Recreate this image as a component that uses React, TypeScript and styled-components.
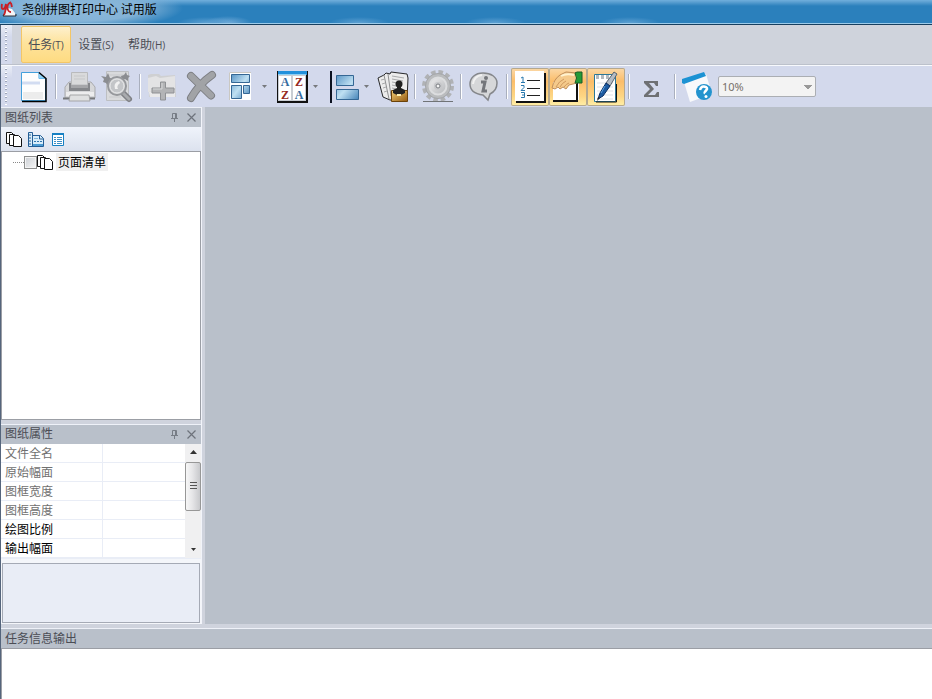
import React from "react";
import styled, { createGlobalStyle, css } from "styled-components";

const Global = createGlobalStyle`
  *, *::before, *::after { box-sizing: border-box; }
  body {
    margin: 0;
    background: #cfd3dd;
    color: #4b4d55;
    font: 12px/18px "Noto Sans CJK SC", sans-serif;
  }
  button, select, input { font: inherit; color: inherit; }
`;

const bevel = css`
  border: 1px solid #9b9ea5;
`;

const Window = styled.div`
  display: flex;
  flex-direction: column;
  min-height: 100vh;
`;

/* ---------- title bar ---------- */

const TitleBar = styled.header`
  display: flex;
  align-items: flex-start;
  gap: 4px;
  height: 25px;
  border-bottom: 1px solid #173f5f;
  box-shadow: inset 0 -1px #9ccbea;
  background:
    radial-gradient(ellipse 30px 6px at 207px 23px, #5da0d2, transparent),
    radial-gradient(ellipse 24px 7px at 228px 23px, #72abd9, transparent),
    radial-gradient(ellipse 30px 6px at 359px 23px, #5da0d2, transparent),
    radial-gradient(ellipse 30px 6px at 495px 23px, #5da0d2, transparent),
    radial-gradient(ellipse 30px 6px at 630px 23px, #5da0d2, transparent),
    radial-gradient(ellipse 105px 22px at 78px 8px, #8db9da 0%, #84b3d7 60%, transparent),
    linear-gradient(#6fafdd 0, #67a7d6 1px, #2b80bc 6px);
  h1 {
    margin: 0;
    font-size: 12px;
    font-weight: 400;
    line-height: 18px;
    color: #000;
  }
`;

/* ---------- command bars ---------- */

const Frame = styled.div`
  display: flex;
  flex-direction: column;
  flex: 1;
  border-left: 1px solid #55657c;
`;

const Grip = styled.span`
  flex: none;
  align-self: stretch;
  width: 11px;
  padding: 2px 5px 2px 4px;
  background: linear-gradient(#e9edf6, #d3d9ec 12px);
  &::after {
    content: "";
    display: block;
    height: 100%;
    background: repeating-linear-gradient(#fff 0 1px, #9da5b9 1px 2px, transparent 2px 4px);
  }
`;

const MenuBar = styled.nav`
  display: flex;
  height: 40px;
  background: #cfd3dc;
  border-bottom: 1px solid #bcc1cb;
`;

const MenuList = styled.div`
  display: flex;
  padding: 1px 0 1px 9px;
`;

const MenuItem = styled.button<{ $hot?: boolean }>`
  min-width: 50px;
  padding: 0 6px 2px;
  border: 1px solid transparent;
  border-radius: 2px;
  background: none;
  white-space: nowrap;
  ${(p) =>
    p.$hot &&
    css`
      border-color: #f3c667;
      background: linear-gradient(#fdf0cd, #fee39c 45%, #fedb82);
    `}
  small {
    font: 10px "Open Sans", sans-serif;
  }
`;

const ToolBar = styled.div`
  display: flex;
  align-items: center;
  height: 42px;
  border-top: 1px solid #f7f9fd;
  background: #d3d9ec;
`;

const Tools = styled.div`
  display: flex;
  align-items: center;
  padding-left: 2px;
`;

const Tool = styled.button<{ $on?: boolean }>`
  display: block;
  flex: none;
  width: 38px;
  height: 38px;
  padding: 0;
  border: 0;
  background: none;
  svg { display: block; }
  ${(p) =>
    p.$on &&
    css`
      border-radius: 2px;
      box-shadow: inset 0 0 0 1px #b4a88f;
      background: linear-gradient(#fbd9a8, #fbbd6a 35%, #fdd684 75%, #fff0a8);
    `}
`;

const DropArrow = styled.button`
  flex: none;
  width: 13px;
  height: 38px;
  padding: 0;
  border: 0;
  background: none;
  svg { display: block; margin: auto; }
`;

const Separator = styled.span`
  flex: none;
  width: 2px;
  height: 25px;
  margin: 0 3px;
  border-left: 1px solid #a9afbd;
  border-right: 1px solid #fff;
`;

const ZoomSelect = styled.select`
  appearance: none;
  width: 98px;
  height: 21px;
  margin-left: 1px;
  padding: 0 3px;
  ${bevel}
  border-color: #abaeb3;
  border-radius: 2px;
  color: #77716a;
  opacity: 1;
  font: 11px "Noto Sans", sans-serif;
  background:
    linear-gradient(to bottom left, #999 50%, transparent 51%) 85px 8px / 4px 4px no-repeat,
    linear-gradient(to bottom right, #999 50%, transparent 51%) 89px 8px / 4px 4px no-repeat,
    #f3f3f3;
`;

/* ---------- docked panels ---------- */

const Body = styled.div`
  display: flex;
  flex: 1;
  min-height: 0;
`;

const Dock = styled.aside`
  display: flex;
  flex-direction: column;
  flex: none;
  width: 201px;
  border-right: 1px solid #f2f4fa;
`;

const Workspace = styled.main`
  flex: 1;
  margin-left: 3px;
  background: #b9c0ca;
`;

const Panel = styled.section<{ $grow?: boolean }>`
  display: flex;
  flex-direction: column;
  flex: ${(p) => (p.$grow ? "1" : "none")};
`;

const PanelHead = styled.div`
  display: flex;
  align-items: center;
  height: 20px;
  padding: 0 1px 0 4px;
  border-top: 1px solid #eef1f8;
  background: #b9c0ca;
  h2 {
    flex: 1;
    margin: 0;
    font-size: 12px;
    font-weight: 400;
    line-height: 16px;
    padding-bottom: 2px;
  }
`;

const HeadButton = styled.button`
  width: 17px;
  height: 17px;
  padding: 0;
  border: 0;
  background: none;
  svg { display: block; margin: auto; }
`;

const PanelTools = styled.div`
  display: flex;
  align-items: center;
  gap: 5px;
  height: 24px;
  padding-left: 5px;
  background: linear-gradient(#eff3fb, #dce2ee);
`;

const SmallTool = styled.button`
  width: 17px;
  height: 17px;
  padding: 0;
  border: 0;
  background: none;
  svg { display: block; }
`;

const Tree = styled.div`
  flex: 1;
  ${bevel}
  background: #fff;
`;

const TreeRow = styled.label`
  display: flex;
  align-items: center;
  height: 20px;
  padding-left: 11px;
  color: #000;
  &::before {
    content: "";
    width: 11px;
    border-top: 1px dotted #888;
  }
  span {
    margin-left: 2px;
    padding: 0 2px;
    background: #f0f0f0;
  }
`;

const TreeCheck = styled.input`
  appearance: none;
  width: 13px;
  height: 13px;
  margin: 0;
  border: 1px solid #8e8f8f;
  box-shadow: inset 0 0 0 1px #f4f4f4;
  background: linear-gradient(135deg, #cbcfd5, #f6f6f6);
`;

const GridArea = styled.div`
  display: flex;
  background: #fff;
`;

const PropTable = styled.table`
  flex: 1;
  border-collapse: collapse;
  table-layout: fixed;
  th, td {
    height: 19px;
    padding: 0 0 0 4px;
    border-bottom: 1px solid #e9edf6;
    line-height: 18px;
    text-align: left;
  }
  th {
    width: 101px;
    border-right: 1px solid #e9edf6;
    font-weight: 400;
  }
`;

const PropRow = styled.tr<{ $editable: boolean }>`
  color: ${(p) => (p.$editable ? "#000" : "#707070")};
`;

const ScrollTrack = styled.div`
  display: flex;
  flex-direction: column;
  width: 16px;
  background: #f0f0f1;
`;

const ScrollButton = styled.button`
  height: 18px;
  padding: 0;
  border: 0;
  background: none;
  svg { display: block; margin: auto; }
`;

const Thumb = styled.div`
  display: grid;
  place-content: center;
  height: 49px;
  margin-bottom: auto;
  border: 1px solid #979797;
  border-radius: 2px;
  background: linear-gradient(90deg, #f7f7f7, #e6e6e8 45%, #c8c9cc);
`;

const Description = styled.div`
  padding: 4px 1px 1px;
  border-top: 1px solid #e9edf6;
  background: #f4f6fa;
  &::after {
    content: "";
    display: block;
    height: 60px;
    border: 1px solid #a5aab5;
    background: #e9edf6;
  }
`;

const Spaced = styled.div`
  margin-top: 4px;
`;

const OutputText = styled.div`
  height: 51px;
  border-top: 1px solid #9b9ea5;
  border-left: 1px solid #9b9ea5;
  background: #fff;
`;

/* ---------- drawings ---------- */

const Gradients = () => (
  <svg width="0" height="0" style={undefined} aria-hidden="true" display="block">
    <defs>
      <linearGradient id="steel" x1="0" y1="0" x2="1" y2="1">
        <stop offset="0" stopColor="#5c97c6" />
        <stop offset=".5" stopColor="#bfe0f2" />
        <stop offset="1" stopColor="#4583b8" />
      </linearGradient>
      <linearGradient id="silver" x1="0" y1="0" x2="1" y2="1">
        <stop offset="0" stopColor="#eeeeef" />
        <stop offset="1" stopColor="#b4b6b9" />
      </linearGradient>
      <linearGradient id="brass" x1="0" y1="0" x2="1" y2="1">
        <stop offset="0" stopColor="#f3cf77" />
        <stop offset="1" stopColor="#94590f" />
      </linearGradient>
    </defs>
  </svg>
);

const Glyph = ({ children }: { children: React.ReactNode }) => (
  <svg width="38" height="38" viewBox="0 0 38 38" aria-hidden="true">
    {children}
  </svg>
);

const AppLogo = () => (
  <svg width="18" height="20" viewBox="0 0 18 20" aria-hidden="true">
    <path d="M4 13l4-5 4 1 3 4v3H4z" fill="#f5f5f5" />
    <path d="M4 14l-1 2h13v-2" fill="none" stroke="#2c2c33" />
    <path d="M2 4q-1 5 1 5t3-5q0 7-2 11M11 2Q7 4 7.500 8T11 12M11 3l1 4" fill="none" stroke="#c91f26" strokeWidth="1.800" />
  </svg>
);

const NewIcon = () => (
  <Glyph>
    <path d="M7.500 4.500h17l7 6v22h-24z" fill="#fdfdfd" />
    <path d="M9 24h20v7H9z" fill="#ececec" />
    <path d="M8 15h18" stroke="#d2dcf1" strokeWidth="3" />
    <path d="M25 4.500v6h6.500v22h-24v-28z" fill="none" stroke="#43a0dc" />
    <path d="M25 4l6.500 6.500H25z" fill="#8fd0f5" />
    <path d="M25 4.500l7 6V33.500H8" fill="none" stroke="#000" strokeWidth="1.500" />
  </Glyph>
);

const PrintIcon = () => (
  <Glyph>
    <path d="M5 19l4-5h22l4 5v11H5z" fill="#d6d7d9" stroke="#a9aaad" />
    <path d="M11.500 4.500h16V17h-16z" fill="#d9dadb" stroke="#b9babc" />
    <path d="M14 8h11M14 11h11" stroke="#c6c7c9" />
    <path d="M9 15h2v4h17v-4h2v8H9z" fill="#85878b" />
    <path d="M11 17h17v3H11z" fill="#a5a6a9" />
    <path d="M6 24h28v4H6z" fill="#ededee" />
    <path d="M3 30.500h32" stroke="#77797c" strokeWidth="2" />
    <path d="M10 27h19l1 6H9z" fill="#dfe0e1" stroke="#a5a6a8" />
  </Glyph>
);

const PreviewIcon = () => (
  <Glyph>
    <path d="M8.500 3.500h22v29h-22z" fill="#d9dadc" stroke="#bdbfc2" />
    <path d="M11 29h12M11 7h16" stroke="#c9cacc" />
    <path d="M3 8l5 1 2-4 2 5 4 1-4 3-1 5-3-4-3-1 1-3zM23 8l3-1 2-3 1 3 3 1-2 2v3l-3-2-3 1z" fill="#8b8d91" />
    <path d="M25 25l6 6" stroke="#7f8186" strokeWidth="6" strokeLinecap="round" />
    <path d="M25 25l6 6" stroke="#a9abae" strokeWidth="3" strokeLinecap="round" />
    <circle cx="19" cy="18" r="9" fill="#d2d3d5" stroke="#96989c" strokeWidth="2" />
    <circle cx="19" cy="18" r="7" fill="#c3c5c8" stroke="#e6e7e8" />
    <path d="M17 21q-2-6 4-8l1 2q-4 3-2 6z" fill="#f1f1f1" />
  </Glyph>
);

const AddIcon = () => (
  <Glyph>
    <path d="M4 7l3-1h8l2 2 14-1 1 22H5z" fill="#cfd0d2" />
    <path d="M4 10l8-2 4 2 15-2v13L4 24z" fill="#e3e3e4" />
    <path d="M5 24l26-2v7H6z" fill="#e9e9ea" />
    <path d="M16.500 14h5v6H30v5h-8.500v7h-5v-7H8v-5h8.500z" fill="#b3b4b6" stroke="#8f9194" />
    <path d="M18 15v6H9" fill="none" stroke="#d6d7d8" />
  </Glyph>
);

const DeleteIcon = () => (
  <Glyph>
    <g fill="none" strokeLinecap="round">
      <path d="M9 8l20 19.500M30 7Q17 16 9 30" stroke="#7d7f83" strokeWidth="8" />
      <path d="M9 8l20 19.500M30 7Q17 16 9 30" stroke="#a1a3a6" strokeWidth="6" />
    </g>
  </Glyph>
);

const LayoutIcon = () => (
  <Glyph>
    <path d="M9 4h22v28H9z" fill="#fff" />
    <path d="M9.500 32V4.500H31" fill="none" stroke="#cac8c2" />
    <g fill="url(#steel)" stroke="#356794">
      <path d="M11.500 6.500h18v8h-18zM11.500 17.500h10v13h-10zM23.500 17.500h6v8h-6z" />
    </g>
  </Glyph>
);

const SortIcon = () => (
  <Glyph>
    <path d="M6 3h31v32H6z" fill="#111" />
    <path d="M7 7h28v26H7z" fill="#c9cdd3" />
    <path d="M8 8h12v24H8zM22 8h12v24H22z" fill="#fff" />
    <path d="M7 3h29v4H7z" fill="#2391dc" />
    <path d="M7 6.500h28" stroke="#8fd0f5" />
    <g fontFamily="Liberation Serif, serif" fontSize="12" fontWeight="700" textAnchor="middle">
      <text x="14" y="18" fill="#366b9f">A</text>
      <text x="28" y="18" fill="#952820">Z</text>
      <text x="14" y="31" fill="#952820">Z</text>
      <text x="28" y="31" fill="#366b9f">A</text>
    </g>
  </Glyph>
);

const AlignIcon = () => (
  <Glyph>
    <path d="M9 3v32" stroke="#0b1120" strokeWidth="2" />
    <g fill="url(#steel)" stroke="#356794">
      <path d="M14.500 7.500h17v10h-17zM14.500 21.500h22v10h-22z" />
    </g>
  </Glyph>
);

const SecureIcon = () => (
  <Glyph>
    <path d="M5 10l6-3 2-2 4 1 1-2 16 2 1 4-1 22H17l-7-3z" fill="#ececec" stroke="#28292b" strokeLinejoin="round" />
    <path d="M11 7l5 24M15 6l3 22" fill="none" stroke="#8e8f90" />
    <path d="M8 12l4-1M9 16l3-1M10 20l3-1M11 24l3-1M19 8l12 2M19 11l11 2M19 14l5 1M19 17l4 1M19 20l4 1" stroke="#a9aaab" />
    <path d="M18.500 22.500h16v11h-16z" fill="url(#brass)" stroke="#6b420a" />
    <circle cx="26" cy="16" r="3.500" fill="#202020" />
    <path d="M24 18h4v2l4 2v3q-6 4-12 0v-3l4-2z" fill="#202020" />
    <path d="M24 27h4" stroke="#fff0b5" strokeWidth="2" />
  </Glyph>
);

const GearIcon = () => (
  <Glyph>
    <circle cx="19" cy="18" r="14" fill="none" stroke="#b0b2b5" strokeWidth="4" strokeDasharray="4.500 2.830" />
    <circle cx="19" cy="18" r="12.500" fill="#babcbe" stroke="#a3a5a8" />
    <circle cx="19" cy="18" r="8.500" fill="url(#silver)" stroke="#dcdddf" strokeWidth="2" />
    <circle cx="19" cy="18" r="4" fill="#c6c7ca" />
    <circle cx="19" cy="18" r="2" fill="#f4f4f4" stroke="#7a7c80" />
    <path d="M4 33.500h30" stroke="#707377" />
  </Glyph>
);

const InfoIcon = () => (
  <Glyph>
    <path d="M18 5c8 0 14 4 14 10 0 5-3 9-7 11l-2 6-5-5C10 26 5 22 5 16S10 5 18 5z" fill="#d6d7d9" stroke="#85878b" strokeWidth="1.500" />
    <path d="M8 16q1-8 9-9" fill="none" stroke="#f1f1f1" strokeWidth="2" />
    <circle cx="21" cy="10" r="2" fill="#74767b" />
    <path d="M16 14h4l-2 9h4" fill="none" stroke="#74767b" strokeWidth="3" />
  </Glyph>
);

const ListIcon = () => (
  <Glyph>
    <path d="M5 5h30v30H5z" fill="#111" />
    <path d="M4 3h29v30H4z" fill="#fff" />
    <path d="M16 12.500h13M16 20.500h13M16 27.500h13" stroke="#222" />
    <g fill="none" stroke="#2878ad">
      <path d="M10 10l2-1v5M10 14.500h4M10 17.500h3v2l-3 3h4M10 24.500h3.500v5H10M11 27h2" />
    </g>
  </Glyph>
);

const HandIcon = () => (
  <Glyph>
    <path d="M4 14h26v18H4z" fill="#fff" />
    <path d="M4 33h24V14" fill="none" stroke="#111" strokeWidth="2" />
    <path d="M3 20q2-9 8-13l6-3 11 1v10l-8 2-3 4-3-2-3 2-2-2-3 2z" fill="#f5ca8b" stroke="#c08f5c" />
    <path d="M7 19q3-6 8-8M11 19q2-4 6-6M15 19q2-3 5-4" fill="none" stroke="#cf995e" />
    <path d="M12 8q5-3 13-1" fill="none" stroke="#fff2cf" strokeWidth="2" />
    <path d="M26 5l2-1h5v11h-7q3-5 0-10z" fill="#229b37" stroke="#185c26" />
  </Glyph>
);

const NoteIcon = () => (
  <Glyph>
    <path d="M7.500 6.500h21v27h-21z" fill="#fff" stroke="#2c7898" />
    <path d="M9 9h18" stroke="#b4b9be" strokeWidth="4" strokeDasharray="3 2" />
    <path d="M10 15h16M10 19h16M10 23h16M10 27h16M10 31h16" stroke="#dde1e6" />
    <path d="M27 4l3 2-7 12-4-3z" fill="#b4bbc4" stroke="#59626c" />
    <path d="M19 15l4 3-7 10-5 3 2-6z" fill="#1c5aa0" stroke="#0b2f63" />
    <path d="M18 18l-4 7" stroke="#5aa0e0" />
    <path d="M11 29l2 1-3 3z" fill="#222" />
    <path d="M9 34h20.500V16" fill="none" stroke="#111" />
  </Glyph>
);

const SumIcon = () => (
  <Glyph>
    <path d="M11 13h14v5h-2l-2-3h-5l5 6-6 6h7l2-3h2v5H11v-2l6-6-6-6z" fill="#6e7073" />
  </Glyph>
);

const HelpIcon = () => (
  <Glyph>
    <path d="M5 14l22-8 6 20-22 8z" fill="#f8f9fb" />
    <path d="M3 11L25 4l2 4-22 8-2-1z" fill="#1c92d3" />
    <circle cx="25" cy="24" r="8" fill="#2393ce" />
    <path d="M21 22q1-4 4-3.500 5 1 2 4-2 2-1 3" fill="none" stroke="#fff" strokeWidth="2.500" />
    <circle cx="27" cy="28.500" r="1.500" fill="#fff" />
  </Glyph>
);

const Triangle = ({ up, color = "#77797d" }: { up?: boolean; color?: string }) => (
  <svg width="7" height="5" viewBox="0 0 7 5" aria-hidden="true">
    <path d={up ? "M0 4h7L3.500 0z" : "M1 1h5L3.500 4z"} fill={color} />
  </svg>
);

const PagesIcon = () => (
  <svg width="17" height="17" viewBox="0 0 17 17" aria-hidden="true">
    <path d="M.500 1.500h5l2 2v9h-7z" fill="#fff" stroke="#111" />
    <path d="M3.500 3.500h5l2 2v9h-7z" fill="#fff" stroke="#111" />
    <path d="M7.500 4.500h5l3 3v8h-8z" fill="#fff" stroke="#111" />
  </svg>
);

const SheetIcon = () => (
  <svg width="17" height="17" viewBox="0 0 17 17" aria-hidden="true">
    <path d="M.500 1.500h4v3h8l3 3v8H.500z" fill="#d8ecf9" stroke="#245e96" />
    <path d="M4.500 4v11M1 4h2M1 7h2M1 10h2M1 13h2M11.500 5v3h4" fill="none" stroke="#245e96" />
    <path d="M5 13h10v2H5z" fill="#4c9bd2" />
    <path d="M6 10.500h8" stroke="#2f75ad" strokeDasharray="2 1" />
    <path d="M6 7.500h4" stroke="#7fb8df" />
  </svg>
);

const DetailsIcon = () => (
  <svg width="17" height="17" viewBox="0 0 17 17" aria-hidden="true">
    <path d="M2.500 2.500h11v12h-11z" fill="#fff" stroke="#1680c3" />
    <path d="M2 3h12" stroke="#1680c3" strokeWidth="2" />
    <path d="M4 6.500h2M4 8.500h2M4 10.500h2M4 12.500h2M7 6.500h5M7 8.500h5M7 10.500h5M7 12.500h5" stroke="#3e8fc5" />
  </svg>
);

const DockButtons = () => (
  <>
    <HeadButton aria-label="自动隐藏">
      <svg width="9" height="9" viewBox="0 0 9 9">
        <path d="M2.500 5V.500h4V5M5.500 1v4M1 5.500h7M4.500 6v3" fill="none" stroke="#777d86" />
      </svg>
    </HeadButton>
    <HeadButton aria-label="关闭">
      <svg width="9" height="9" viewBox="0 0 9 9">
        <path d="M.500.500l8 8M8.500.500l-8 8" stroke="#6d727b" strokeWidth="1.200" />
      </svg>
    </HeadButton>
  </>
);

/* ---------- content ---------- */

const menus = [
  { name: "任务", key: "T", hot: true },
  { name: "设置", key: "S" },
  { name: "帮助", key: "H" },
];

type ToolEntry = { name: string; Icon: React.FC; on?: boolean; drop?: boolean };

const toolGroups: ToolEntry[][] = [
  [{ name: "新建", Icon: NewIcon }],
  [
    { name: "打印", Icon: PrintIcon },
    { name: "预览", Icon: PreviewIcon },
  ],
  [
    { name: "添加", Icon: AddIcon },
    { name: "删除", Icon: DeleteIcon },
    { name: "排版", Icon: LayoutIcon, drop: true },
    { name: "排序", Icon: SortIcon, drop: true },
    { name: "对齐", Icon: AlignIcon, drop: true },
    { name: "图纸加密", Icon: SecureIcon },
  ],
  [{ name: "选项", Icon: GearIcon }],
  [{ name: "信息", Icon: InfoIcon }],
  [
    { name: "列表", Icon: ListIcon, on: true },
    { name: "属性", Icon: HandIcon, on: true },
    { name: "输出", Icon: NoteIcon, on: true },
  ],
  [{ name: "统计", Icon: SumIcon }],
  [{ name: "帮助", Icon: HelpIcon }],
];

const properties = [
  { name: "文件全名", editable: false },
  { name: "原始幅面", editable: false },
  { name: "图框宽度", editable: false },
  { name: "图框高度", editable: false },
  { name: "绘图比例", editable: true },
  { name: "输出幅面", editable: true },
];

export default function App() {
  return (
    <Window>
      <Global />
      <Gradients />
      <TitleBar>
        <AppLogo />
        <h1>尧创拼图打印中心 试用版</h1>
      </TitleBar>
      <Frame>
        <MenuBar>
          <Grip />
          <MenuList>
            {menus.map((m) => (
              <MenuItem key={m.key} $hot={m.hot}>
                {m.name}
                <small>({m.key})</small>
              </MenuItem>
            ))}
          </MenuList>
        </MenuBar>
        <ToolBar role="toolbar">
          <Grip />
          <Tools>
            {toolGroups.map((group, i) => (
              <React.Fragment key={i}>
                {i > 0 && <Separator />}
                {group.map(({ name, Icon, on, drop }) => (
                  <React.Fragment key={name}>
                    <Tool $on={on} aria-label={name} aria-pressed={on}>
                      <Icon />
                    </Tool>
                    {drop && (
                      <DropArrow aria-label={name + "选项"}>
                        <Triangle />
                      </DropArrow>
                    )}
                  </React.Fragment>
                ))}
              </React.Fragment>
            ))}
            <ZoomSelect aria-label="显示比例" disabled defaultValue="10%">
              <option>10%</option>
            </ZoomSelect>
          </Tools>
        </ToolBar>
        <Body>
          <Dock>
            <Panel $grow>
              <PanelHead>
                <h2>图纸列表</h2>
                <DockButtons />
              </PanelHead>
              <PanelTools>
                <SmallTool aria-label="页面"><PagesIcon /></SmallTool>
                <SmallTool aria-label="图纸"><SheetIcon /></SmallTool>
                <SmallTool aria-label="清单"><DetailsIcon /></SmallTool>
              </PanelTools>
              <Tree>
                <TreeRow>
                  <TreeCheck type="checkbox" />
                  <PagesIcon />
                  <span>页面清单</span>
                </TreeRow>
              </Tree>
            </Panel>
            <Spaced>
              <Panel>
                <PanelHead>
                  <h2>图纸属性</h2>
                  <DockButtons />
                </PanelHead>
                <GridArea>
                  <PropTable>
                    <tbody>
                      {properties.map((p) => (
                        <PropRow key={p.name} $editable={p.editable}>
                          <th scope="row">{p.name}</th>
                          <td />
                        </PropRow>
                      ))}
                    </tbody>
                  </PropTable>
                  <ScrollTrack>
                    <ScrollButton aria-label="向上"><Triangle up color="#333" /></ScrollButton>
                    <Thumb>
                      <svg width="7" height="8" viewBox="0 0 7 8" aria-hidden="true">
                        <path d="M0 .500h7M0 3.500h7M0 6.500h7" stroke="#555" />
                      </svg>
                    </Thumb>
                    <ScrollButton aria-label="向下"><Triangle color="#333" /></ScrollButton>
                  </ScrollTrack>
                </GridArea>
                <Description />
              </Panel>
            </Spaced>
          </Dock>
          <Workspace />
        </Body>
        <Spaced as="section">
          <PanelHead>
            <h2>任务信息输出</h2>
          </PanelHead>
          <OutputText />
        </Spaced>
      </Frame>
    </Window>
  );
}
